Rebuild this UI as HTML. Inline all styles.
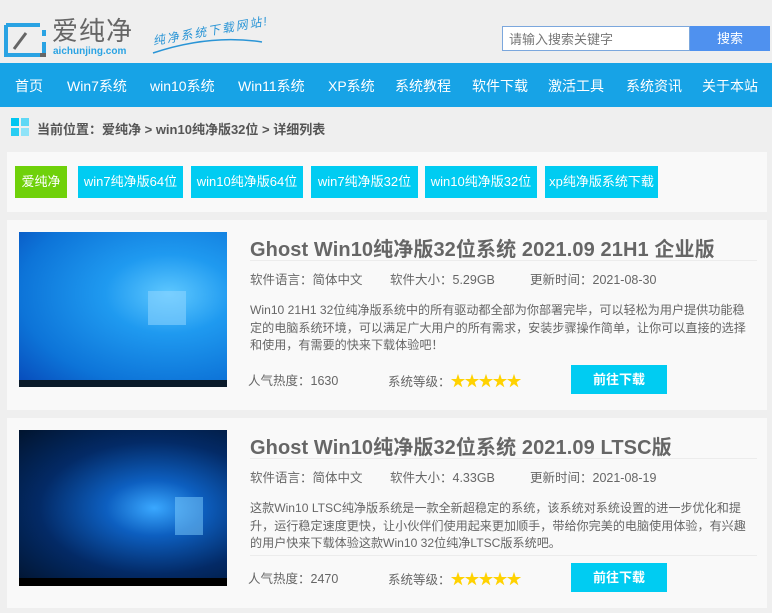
<!DOCTYPE html>
<html><head><meta charset="utf-8"><style>
*{margin:0;padding:0;box-sizing:border-box}
body{width:772px;height:613px;overflow:hidden;background:#efefef;font-family:"Liberation Sans","Noto Sans CJK SC",sans-serif;position:relative;color:#666}
.a{position:absolute;white-space:nowrap}
.nav{position:absolute;left:0;top:63px;width:772px;height:44px;background:#17a3e6}
.nav span{position:absolute;top:13px;color:#fff;font-size:14px}
.card{position:absolute;left:7px;width:760px;background:#f9f9f9}
.tag{position:absolute;top:166px;height:32px;line-height:32px;color:#fff;font-size:13px;text-align:center;background:#00ccf2}
.t{font-size:20px;font-weight:bold;color:#666;letter-spacing:0.1px}
.m{font-size:12.5px;color:#666}
.d{font-size:12.1px;line-height:17.5px;color:#666}
.btn{position:absolute;width:96px;height:29px;background:#00ccf2;color:#fff;font-weight:bold;font-size:13px;text-align:center;line-height:29px}
.star{color:#ffd200;font-size:15px;letter-spacing:-1px}
.ln{position:absolute;left:250px;width:507px;height:1px;background:#ececec}
</style></head><body>
<svg class="a" style="left:4px;top:22px" width="42" height="36" viewBox="0 0 42 36"><path d="M2 3 H36 M2 3 V33 H36 M40 8 V14 M40 20 V33" stroke="#2aa3e3" stroke-width="4" fill="none"/><path d="M10 27 L22 11" stroke="#666" stroke-width="3"/><path d="M36 33 H42" stroke="#666" stroke-width="4"/></svg>
<div class="a" style="left:52px;top:16px;font-size:26px;line-height:30px;color:#666;letter-spacing:1px">爱纯净</div>
<div class="a" style="left:53px;top:46px;font-size:10px;font-weight:bold;color:#2aa3e3">aichunjing.com</div>
<div class="a" style="left:152px;top:22px;font-size:12px;font-style:italic;color:#2a95d6;transform:rotate(-10deg);letter-spacing:2px">纯净系统下载网站!</div>
<svg class="a" style="left:150px;top:36px" width="115" height="20"><path d="M3 17 Q60 -2 112 6" stroke="#2a95d6" stroke-width="1.5" fill="none"/></svg>
<div class="a" style="left:502px;top:26px;width:188px;height:25px;border:1px solid #7ba7dd;background:#fff;font-size:13px;color:#777;padding:2px 0 0 6px">请输入搜索关键字</div>
<div class="a" style="left:690px;top:26px;width:80px;height:25px;background:#4f91ef;color:#fff;font-size:13px;text-align:center;line-height:25px">搜索</div>
<div class="nav">
<span style="left:15px">首页</span><span style="left:67px">Win7系统</span><span style="left:150px">win10系统</span><span style="left:238px">Win11系统</span><span style="left:328px">XP系统</span><span style="left:395px">系统教程</span><span style="left:472px">软件下载</span><span style="left:548px">激活工具</span><span style="left:626px">系统资讯</span><span style="left:702px">关于本站</span>
</div>
<svg class="a" style="left:11px;top:118px" width="18" height="18"><rect x="0" y="0" width="8" height="8" fill="#00c6f0"/><rect x="10" y="0" width="8" height="8" fill="#5fd8f5"/><rect x="0" y="10" width="8" height="8" fill="#28cdf2"/><rect x="10" y="10" width="8" height="8" fill="#8fe3f8"/></svg>
<div class="a" style="left:37px;top:119px;font-size:13px;font-weight:bold;color:#555">当前位置：爱纯净 &gt; win10纯净版32位 &gt; 详细列表</div>
<div class="card" style="top:152px;height:60px"></div>
<div class="tag" style="left:15px;width:52px;background:#6fd10a">爱纯净</div>
<div class="tag" style="left:78px;width:105px">win7纯净版64位</div>
<div class="tag" style="left:191px;width:112px">win10纯净版64位</div>
<div class="tag" style="left:311px;width:107px">win7纯净版32位</div>
<div class="tag" style="left:425px;width:112px">win10纯净版32位</div>
<div class="tag" style="left:545px;width:113px">xp纯净版系统下载</div>
<div class="card" style="top:220px;height:190px"></div>
<div class="a" style="left:19px;top:232px;width:208px;height:155px;background:radial-gradient(ellipse at 72% 40%,#5ec8ff 0%,#1f9af0 30%,#0d74d8 70%,#0748b8 100%)"></div>
<div class="a" style="left:148px;top:291px;width:38px;height:34px;background:#8fd6ff;opacity:.55"></div>
<div class="a" style="left:19px;top:380px;width:208px;height:7px;background:#0a1a2a"></div>
<div class="a t" style="left:250px;top:233px">Ghost Win10纯净版32位系统 2021.09 21H1 企业版</div>
<div class="ln" style="top:260px"></div>
<div class="a m" style="left:250px;top:269px">软件语言：简体中文</div>
<div class="a m" style="left:390px;top:269px">软件大小：5.29GB</div>
<div class="a m" style="left:530px;top:269px">更新时间：2021-08-30</div>
<div class="a d" style="left:250px;top:302px">Win10 21H1 32位纯净版系统中的所有驱动都全部为你部署完毕，可以轻松为用户提供功能稳<br>定的电脑系统环境，可以满足广大用户的所有需求，安装步骤操作简单，让你可以直接的选择<br>和使用，有需要的快来下载体验吧！</div>
<div class="a m" style="left:248px;top:370px">人气热度：1630</div>
<div class="a m" style="left:388px;top:370px">系统等级：<span class="star">★★★★★</span></div>
<div class="btn" style="left:571px;top:365px">前往下载</div>
<div class="card" style="top:418px;height:190px"></div>
<div class="a" style="left:19px;top:430px;width:208px;height:156px;background:radial-gradient(ellipse at 65% 50%,#3aa8ff 0%,#0d5fc0 25%,#032a66 60%,#01142e 100%)"></div>
<div class="a" style="left:175px;top:497px;width:28px;height:38px;background:#7fd0ff;opacity:.5"></div>
<div class="a" style="left:19px;top:578px;width:208px;height:8px;background:#000"></div>
<div class="a t" style="left:250px;top:431px">Ghost Win10纯净版32位系统 2021.09 LTSC版</div>
<div class="ln" style="top:458px"></div>
<div class="a m" style="left:250px;top:467px">软件语言：简体中文</div>
<div class="a m" style="left:390px;top:467px">软件大小：4.33GB</div>
<div class="a m" style="left:530px;top:467px">更新时间：2021-08-19</div>
<div class="a d" style="left:250px;top:500px">这款Win10 LTSC纯净版系统是一款全新超稳定的系统，该系统对系统设置的进一步优化和提<br>升，运行稳定速度更快，让小伙伴们使用起来更加顺手，带给你完美的电脑使用体验，有兴趣<br>的用户快来下载体验这款Win10 32位纯净LTSC版系统吧。</div>
<div class="ln" style="top:555px"></div>
<div class="a m" style="left:248px;top:568px">人气热度：2470</div>
<div class="a m" style="left:388px;top:568px">系统等级：<span class="star">★★★★★</span></div>
<div class="btn" style="left:571px;top:563px">前往下载</div>
</body></html>
